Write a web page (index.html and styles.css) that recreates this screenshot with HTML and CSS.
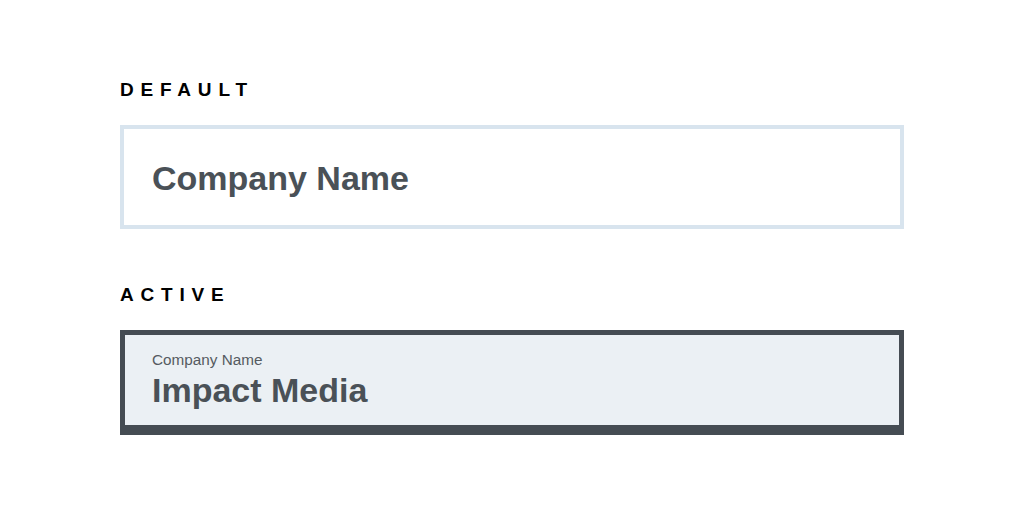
FILE: index.html
```html
<!DOCTYPE html>
<html lang="en">
<head>
  <meta charset="UTF-8">
  <meta name="viewport" content="width=device-width, initial-scale=1.0">
  <title>Input States</title>
  <link rel="stylesheet" href="styles.css">
</head>
<body>

<div class="states">
  <!-- Default state -->
  <div class="state">
    <h3 class="state-title">Default</h3>
    <div class="field field-default">
      <span class="field-placeholder">Company Name</span>
    </div>
  </div>

  <!-- Active state -->
  <div class="state">
    <h3 class="state-title">Active</h3>
    <div class="field field-active">
      <span class="field-label">Company Name</span>
      <span class="field-value">Impact Media</span>
    </div>
  </div>
</div>

</body>
</html>
```

FILE: styles.css
```css
/* Input States */
body {
  font-family: "Liberation Sans", Arial, sans-serif;
  background-color: #fff;
  margin: 0;
  padding: 0;
  color: #000;
}
.states {
  width: 784px;
  margin-left: 120px;
  padding-top: 79px;
}
.state {
  margin-bottom: 55px;
}
.state-title {
  margin: 0 0 24px;
  font-size: 19px;
  line-height: 22px;
  font-weight: bold;
  text-transform: uppercase;
  letter-spacing: 6.8px;
}
.field {
  box-sizing: border-box;
  height: 104px;
  padding: 0 28px;
  display: flex;
  flex-direction: column;
  justify-content: center;
}
.field-default {
  border: 4px solid #d8e4ee;
  background-color: #fff;
}
.field-active {
  height: 105px;
  padding: 0 27px;
  border: 5px solid #454c53;
  border-bottom-width: 10px;
  background-color: #ebf0f4;
}
.field-placeholder, .field-value {
  font-size: 34px;
  line-height: 38px;
  font-weight: bold;
  color: #4a5157;
}
.field-placeholder {
  padding-top: 2px;
}
.field-label {
  font-size: 15.3px;
  line-height: 16px;
  color: #555b61;
  margin-bottom: 3px;
}
```
